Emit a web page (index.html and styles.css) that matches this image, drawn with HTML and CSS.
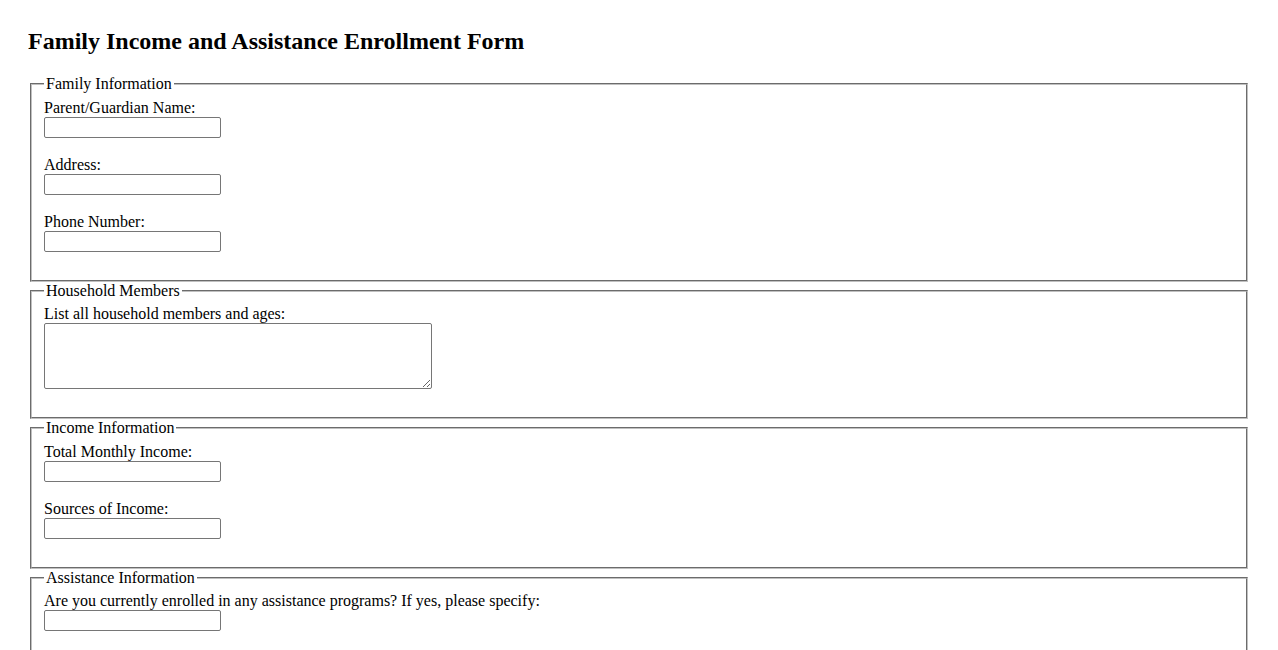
FILE: index.html
```html
<!DOCTYPE html>
<html lang="en">
<head>
<meta charset="utf-8">
<title>Family Income and Assistance Enrollment Form</title>
<link rel="stylesheet" href="styles.css">
</head>
<body class="page">
<h2 class="title">Family Income and Assistance Enrollment Form</h2>
<form class="form">
  <fieldset class="section">
    <legend class="legend">Family Information</legend>
    <div class="group">
      <label class="label" for="name">Parent/Guardian Name:</label>
      <input class="field" type="text" id="name">
    </div>
    <div class="group">
      <label class="label" for="address">Address:</label>
      <input class="field" type="text" id="address">
    </div>
    <div class="group">
      <label class="label" for="phone">Phone Number:</label>
      <input class="field" type="text" id="phone">
    </div>
  </fieldset>
  <fieldset class="section">
    <legend class="legend">Household Members</legend>
    <div class="group">
      <label class="label" for="members">List all household members and ages:</label>
      <textarea class="area" id="members" rows="4" cols="50"></textarea>
    </div>
  </fieldset>
  <fieldset class="section">
    <legend class="legend">Income Information</legend>
    <div class="group">
      <label class="label" for="income">Total Monthly Income:</label>
      <input class="field" type="text" id="income">
    </div>
    <div class="group">
      <label class="label" for="sources">Sources of Income:</label>
      <input class="field" type="text" id="sources">
    </div>
  </fieldset>
  <fieldset class="section">
    <legend class="legend">Assistance Information</legend>
    <div class="group">
      <label class="label" for="programs">Are you currently enrolled in any assistance programs? If yes, please specify:</label>
      <input class="field" type="text" id="programs">
    </div>
  </fieldset>
</form>
</body>
</html>
```
FILE: styles.css
```css
html, body {
  background: #ffffff;
}
.page {
  margin: 28px;
  font-family: "Liberation Serif", "Times New Roman", serif;
  font-size: 16px;
  color: #000000;
}
.title {
  font-size: 24px;
  font-weight: bold;
  margin: 0 0 19.92px 0;
  line-height: normal;
}
.form {
  margin: 0;
}
.section {
  margin: 0 2px;
  padding: 5.6px 12px 10px 12px;
  border: 2px groove #c0c0c0;
  min-width: 0;
}
.legend {
  padding: 0 2px;
  line-height: 18px;
}
.group {
  margin-bottom: 18px;
}
.label {
  display: block;
  line-height: 18px;
}
.field {
  display: block;
  box-sizing: border-box;
  width: 177px;
  height: 21px;
  margin: 0;
  padding: 1px 2px;
  border: 1px solid #767676;
  border-radius: 2px;
  font-family: "Liberation Sans", Arial, sans-serif;
  font-size: 13.333px;
  background: #ffffff;
}
.area {
  display: block;
  box-sizing: border-box;
  width: 388px;
  height: 66px;
  margin: 0;
  padding: 2px;
  border: 1px solid #767676;
  border-radius: 2px;
  font-family: "Liberation Mono", monospace;
  font-size: 13.333px;
  background: #ffffff;
}
```
